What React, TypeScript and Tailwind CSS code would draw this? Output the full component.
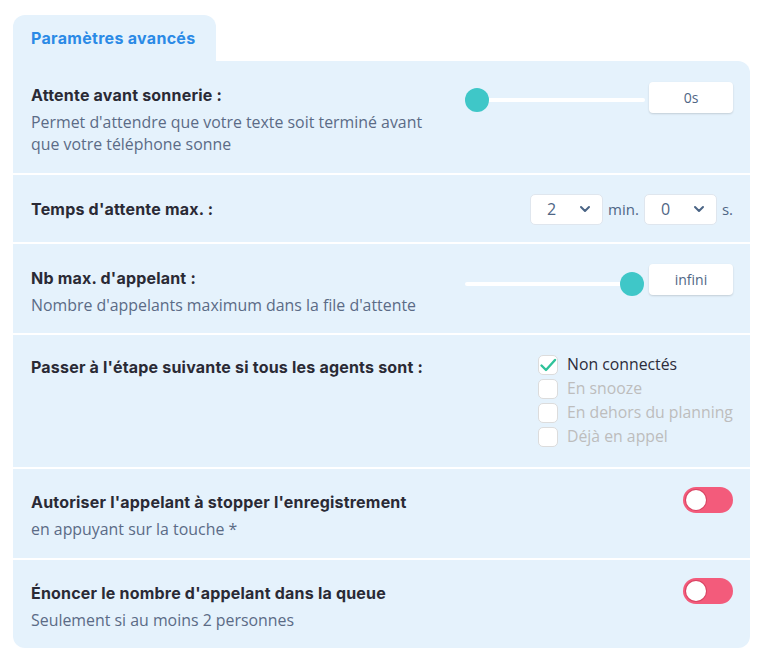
const heading = "font-['Inter',sans-serif] font-bold text-[16px] leading-[20px] text-[#2a2a35] tracking-[0.2px]";
const body = "font-['Open_Sans',sans-serif]";

const Chevron = () => (
  <svg width="14" height="14" viewBox="0 0 14 14" fill="none">
    <path d="M3 5l4 4 4-4" stroke="#4a6485" strokeWidth="2" strokeLinecap="round" strokeLinejoin="round" />
  </svg>
);

const Select = ({ value }: { value: string }) => (
  <div className="w-[73px] h-[31px] bg-white rounded-[5px] border border-[#dfe6ee] flex items-center justify-between pl-[16px] pr-[10px]">
    <span className={`${body} text-[16px] text-[#4f6685]`}>{value}</span>
    <Chevron />
  </div>
);

const Slider = ({ pos }: { pos: "start" | "end" }) => (
  <div className="relative w-[180px] h-[24px] flex items-center">
    <div className={`h-[4px] bg-white rounded-full ${pos === "start" ? "ml-[12px] w-[168px]" : "w-[167px]"}`}></div>
    <div
      className={`absolute top-0 w-[24px] h-[24px] rounded-full bg-[#3fc7c8] ${pos === "start" ? "left-0" : "left-[155px]"}`}
    ></div>
  </div>
);

const ValueBox = ({ value }: { value: string }) => (
  <div className={`w-[84px] h-[31px] bg-white rounded-[4px] shadow-[0_1px_2px_rgba(0,0,0,0.15)] flex items-center justify-center ${body} text-[14px] text-[#4f6685]`}>
    {value}
  </div>
);

const Toggle = () => (
  <div className="w-[50px] h-[26px] rounded-full bg-[#f35b7b] flex items-center pl-[3px]">
    <div className="w-[20px] h-[20px] rounded-full bg-white shadow-[0_0_0_1px_#d94463]"></div>
  </div>
);

const Check = ({ checked, label }: { checked?: boolean; label: string }) => (
  <div className="flex items-center gap-[9px] h-[24px]">
    <div className="w-[20px] h-[20px] shrink-0 rounded-[5px] bg-white border border-[#dcdcdc] flex items-center justify-center">
      {checked && (
        <svg width="18" height="18" viewBox="0 0 18 18" fill="none">
          <path d="M2.5 9.5l4.5 4.5 9-10" stroke="#2fc29a" strokeWidth="2.4" strokeLinecap="round" strokeLinejoin="round" />
        </svg>
      )}
    </div>
    <span className={`${body} text-[15.8px] whitespace-nowrap ${checked ? "text-[#2c2c3a]" : "text-[#bdbdbd]"}`}>{label}</span>
  </div>
);

export default function App() {
  return (
    <div className="w-[766px] h-[664px] bg-white pt-[15px] pl-[13px]">
      {/* Tab */}
      <div className="w-[203px] h-[46px] bg-[#e5f2fc] rounded-t-[12px] flex items-center pl-[18px]">
        <span className="font-['Inter',sans-serif] font-bold text-[16px] text-[#2b8ae6] tracking-[0.3px]">Paramètres avancés</span>
      </div>

      <div className="w-[737px] rounded-b-[12px] rounded-tr-[12px] overflow-hidden flex flex-col gap-[2px]">
        {/* Attente avant sonnerie */}
        <div className="h-[112px] bg-[#e5f2fc] flex justify-between pl-[18px] pr-[17px] pt-[24px]">
          <div>
            <div className={heading}>Attente avant sonnerie :</div>
            <p className={`${body} text-[15.9px] leading-[22px] text-[#5b6b86] mt-[6px] w-[410px]`}>
              Permet d'attendre que votre texte soit terminé avant que votre téléphone sonne
            </p>
          </div>
          <div className="flex items-start gap-[4px] -mt-[3px]">
            <div className="mt-[6px]">
              <Slider pos="start" />
            </div>
            <ValueBox value="0s" />
          </div>
        </div>

        {/* Temps d'attente max */}
        <div className="h-[67px] bg-[#e5f2fc] flex items-center justify-between pl-[18px] pr-[17px]">
          <div className={heading}>Temps d'attente max. :</div>
          <div className="flex items-center gap-[5px] mt-[1px]">
            <Select value="2" />
            <span className={`${body} text-[15px] text-[#4f6685]`}>min.</span>
            <Select value="0" />
            <span className={`${body} text-[15px] text-[#4f6685]`}>s.</span>
          </div>
        </div>

        {/* Nb max d'appelant */}
        <div className="h-[89px] bg-[#e5f2fc] flex justify-between pl-[18px] pr-[17px] pt-[24px]">
          <div>
            <div className={heading}>Nb max. d'appelant :</div>
            <p className={`${body} text-[15.9px] leading-[22px] text-[#5b6b86] mt-[6px]`}>
              Nombre d'appelants maximum dans la file d'attente
            </p>
          </div>
          <div className="flex items-start gap-[4px] -mt-[4px]">
            <div className="mt-[8px]">
              <Slider pos="end" />
            </div>
            <ValueBox value="infini" />
          </div>
        </div>

        {/* Passer à l'étape suivante */}
        <div className="h-[132px] bg-[#e5f2fc] flex justify-between pl-[18px] pr-[17px] pt-[18px]">
          <div className={`${heading} mt-[4px]`}>Passer à l'étape suivante si tous les agents sont :</div>
          <div className="flex flex-col w-[195px]">
            <Check checked label="Non connectés" />
            <Check label="En snooze" />
            <Check label="En dehors du planning" />
            <Check label="Déjà en appel" />
          </div>
        </div>

        {/* Autoriser l'appelant */}
        <div className="h-[89px] bg-[#e5f2fc] flex justify-between pl-[18px] pr-[17px] pt-[23px]">
          <div>
            <div className={heading}>Autoriser l'appelant à stopper l'enregistrement</div>
            <p className={`${body} text-[15.9px] leading-[22px] text-[#5b6b86] mt-[6px]`}>en appuyant sur la touche *</p>
          </div>
          <div className="mt-[-5px]">
            <Toggle />
          </div>
        </div>

        {/* Énoncer le nombre */}
        <div className="h-[88px] bg-[#e5f2fc] flex justify-between pl-[18px] pr-[17px] pt-[23px]">
          <div>
            <div className={heading}>Énoncer le nombre d'appelant dans la queue</div>
            <p className={`${body} text-[15.9px] leading-[22px] text-[#5b6b86] mt-[6px]`}>Seulement si au moins 2 personnes</p>
          </div>
          <div className="mt-[-5px]">
            <Toggle />
          </div>
        </div>
      </div>
    </div>
  );
}
